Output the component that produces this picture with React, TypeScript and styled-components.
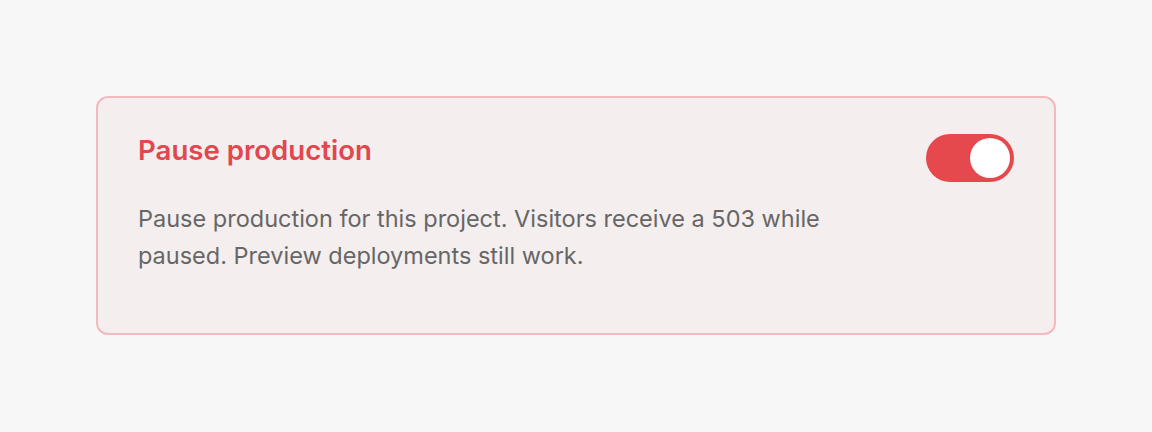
import React, { useState } from "react";
import styled, { createGlobalStyle } from "styled-components";

const GlobalStyle = createGlobalStyle`
    html, body {
        margin: 0;
        padding: 0;
        background: #f7f7f7;
        font-family: Inter, "Noto Sans", sans-serif;
    }
`;

const Page = styled.main`
    box-sizing: border-box;
    height: 432px;
    padding: 96px 96px 0;
`;

const Card = styled.section`
    box-sizing: border-box;
    height: 239px;
    padding: 36px 40px;
    background: #f5eeee;
    border: 2px solid #f3babd;
    border-radius: 12px;
`;

const Header = styled.div`
    display: flex;
    justify-content: space-between;
    align-items: flex-start;
`;

const Title = styled.h2`
    margin: 0;
    font-size: 27.6px;
    line-height: 32px;
    font-weight: 600;
    color: #e0474f;
`;

const Description = styled.p`
    margin: 18px 0 0;
    max-width: 720px;
    font-size: 23.5px;
    line-height: 37px;
    color: #666;
`;

const Switch = styled.button<{ $on: boolean }>`
    flex: none;
    position: relative;
    width: 88px;
    height: 48px;
    padding: 0;
    border: none;
    border-radius: 24px;
    background: ${(p) => (p.$on ? "#e5484d" : "#cfc8c8")};
    cursor: pointer;

    &::after {
        content: "";
        position: absolute;
        top: 4px;
        left: ${(p) => (p.$on ? "44px" : "4px")};
        width: 40px;
        height: 40px;
        border-radius: 50%;
        background: #fff;
        transition: left 0.15s;
    }
`;

export default function App() {
    const [paused, setPaused] = useState(true);

    return (
        <>
            <GlobalStyle />
            <Page>
                <Card>
                    <Header>
                        <Title>Pause production</Title>
                        <Switch
                            $on={paused}
                            role="switch"
                            aria-checked={paused}
                            aria-label="Pause production"
                            onClick={() => setPaused(!paused)}
                        />
                    </Header>
                    <Description>
                        Pause production for this project. Visitors receive a 503 while
                        paused. Preview deployments still work.
                    </Description>
                </Card>
            </Page>
        </>
    );
}
